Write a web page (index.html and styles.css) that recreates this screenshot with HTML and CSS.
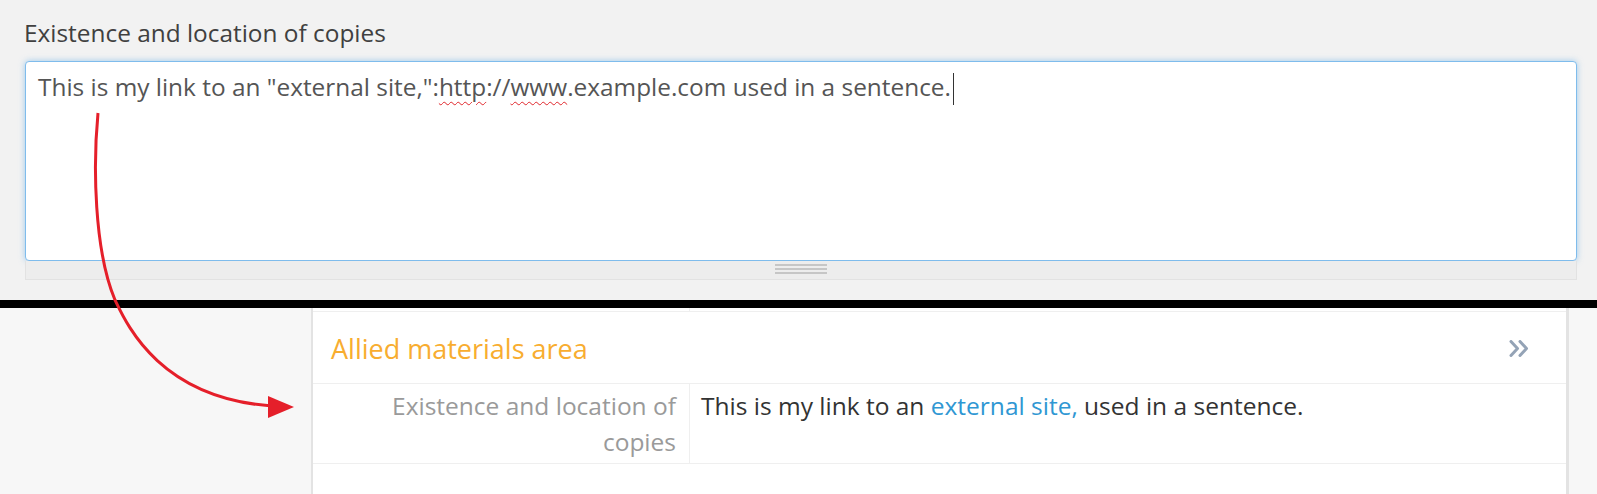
FILE: index.html
```html
<!DOCTYPE html>
<html lang="en">
<head>
<meta charset="utf-8">
<title>Textile link rendering</title>
<link rel="stylesheet" href="styles.css">
</head>
<body>
<div class="page">
  <section class="edit">
    <div class="field-label">Existence and location of copies</div>
    <div class="editor">This is my link to an "external site,":<span class="spell">http</span>://<span class="spell">www</span>.example.com used in a sentence.<span class="caret"></span></div>
    <div class="grip"><span class="grip-lines"></span></div>
  </section>
  <div class="divider"></div>
  <section class="view">
    <div class="panel">
      <div class="prev-row"><div class="prev-cell"></div><div></div></div>
      <div class="panel-head">
        <h2 class="panel-title">Allied materials area</h2>
        <svg class="chev" width="20" height="17" viewBox="0 0 20 17" aria-hidden="true">
          <polyline points="2,1.5 8.5,8.5 2,15.5" />
          <polyline points="11,1.5 17.5,8.5 11,15.5" />
        </svg>
      </div>
      <div class="row">
        <div class="row-label">Existence and location of copies</div>
        <div class="row-value">This is my link to an <a href="#" class="link">external site,</a> used in a sentence.</div>
      </div>
    </div>
  </section>
  <svg class="arrow" width="1597" height="494" viewBox="0 0 1597 494" aria-hidden="true">
    <path d="M98 113 C93 165 94 250 115 300 C127 325 160 398 272 406" />
    <polygon points="268,396 294,407 268,418" />
  </svg>
</div>
</body>
</html>
```
FILE: styles.css
```css
* { box-sizing: border-box; }
html, body { margin: 0; padding: 0; }
body {
  font-family: "Open Sans", "Noto Sans", sans-serif;
  background: #f7f7f7;
}
.page {
  position: relative;
  width: 1597px;
  height: 494px;
  overflow: hidden;
}
.edit {
  height: 300px;
  background: #f2f2f2;
  padding: 16px 20px 0 25px;
}
.field-label {
  font-size: 24.4px;
  line-height: 33px;
  color: #404040;
  margin: 0 0 12px -1px;
}
.editor {
  width: 1552px;
  height: 200px;
  background: #fff;
  border: 1px solid #7fbcec;
  border-radius: 4px;
  box-shadow: 0 0 6px rgba(102, 175, 233, 0.6);
  padding: 8px 12px;
  font-size: 24.4px;
  line-height: 33px;
  color: #555;
}
.spell {
  text-decoration: underline wavy #e0262b;
  text-decoration-thickness: 1px;
  text-underline-offset: 5px;
}
.caret {
  display: inline-block;
  width: 1px;
  height: 32px;
  background: #333;
  vertical-align: -9px;
  margin-left: 2px;
}
.grip {
  width: 1552px;
  height: 19px;
  background: #ededed;
  border: 1px solid #e2e2e2;
  border-top: none;
  display: flex;
  justify-content: center;
  padding-top: 3px;
}
.grip-lines {
  width: 52px;
  height: 10px;
  background: repeating-linear-gradient(#c6c6c6 0 2px, transparent 2px 4px);
}
.divider {
  height: 8px;
  background: #000;
}
.view {
  height: 186px;
  background: #f7f7f7;
  padding-left: 311px;
}
.panel {
  width: 1258px;
  height: 100%;
  background: #fff;
  border-left: 2px solid #e3e3e3;
  border-right: 3px solid #e3e3e3;
}
.prev-row {
  height: 4px;
  display: grid;
  grid-template-columns: 377px 1fr;
  border-bottom: 1px solid #efefef;
}
.prev-cell {
  border-right: 1px solid #efefef;
}
.panel-head {
  display: flex;
  justify-content: space-between;
  align-items: center;
  padding: 18px 37px 16px 18px;
  border-bottom: 1px solid #efefef;
}
.panel-title {
  margin: 0;
  font-size: 27px;
  line-height: 37px;
  font-weight: 400;
  color: #f8ad30;
}
.chev polyline {
  fill: none;
  stroke: #94a3b6;
  stroke-width: 3;
  stroke-linecap: round;
  stroke-linejoin: round;
}
.row {
  display: grid;
  grid-template-columns: 377px 1fr;
  border-bottom: 1px solid #efefef;
  font-size: 24.5px;
  line-height: 36px;
}
.row-label {
  text-align: right;
  color: #9a9a9a;
  border-right: 1px solid #efefef;
  padding: 4px 13px 3px 20px;
}
.row-value {
  color: #333;
  padding: 4px 13px 3px 11px;
}
.link {
  color: #2f97d3;
  text-decoration: none;
}
.arrow {
  position: absolute;
  left: 0;
  top: 0;
  pointer-events: none;
}
.arrow path {
  fill: none;
  stroke: #e51f2a;
  stroke-width: 3;
}
.arrow polygon {
  fill: #e51f2a;
}
```
